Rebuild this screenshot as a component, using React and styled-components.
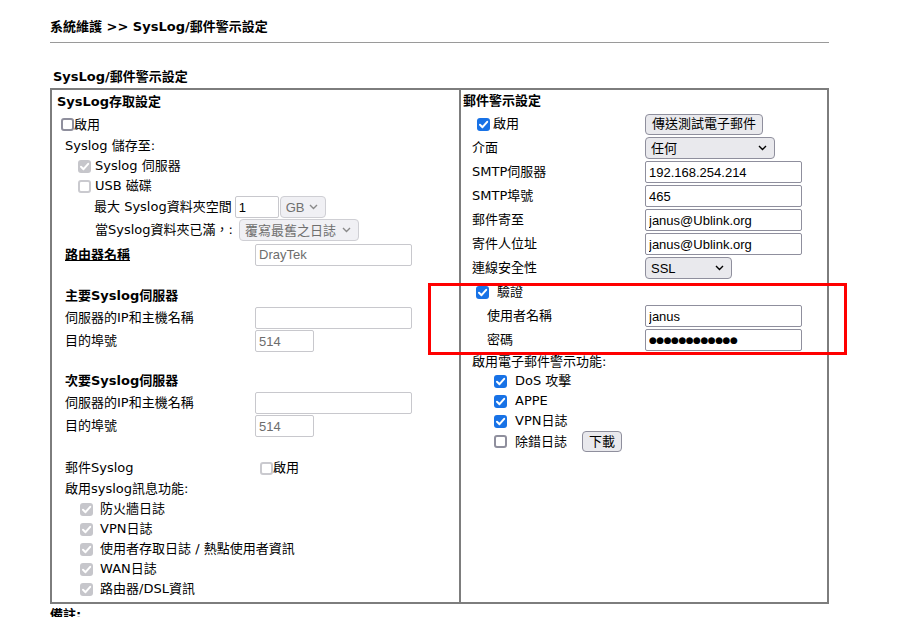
import React from "react";
import styled, { createGlobalStyle, css } from "styled-components";

const GlobalStyle = createGlobalStyle`
  html, body { margin: 0; padding: 0; background: #fff; }
  body {
    font-family: "DejaVu Sans", "Noto Sans CJK TC", sans-serif;
    font-size: 13px;
    color: #000;
  }
  * { box-sizing: border-box; }
`;

const Page = styled.div`
  position: relative;
  width: 829px;
  padding-left: 50px;
`;

const PageTitle = styled.div`
  padding-top: 18px;
  line-height: 18px;
  font-weight: bold;
  white-space: nowrap;
`;

const Rule = styled.div`
  margin-top: 6px;
  height: 1px;
  background: #9a9a9a;
`;

const SectionTitle = styled.div`
  margin-top: 25px;
  padding-left: 3px;
  line-height: 18px;
  font-weight: bold;
`;

const Table = styled.div`
  margin-top: 2px;
  display: flex;
  border: 1px solid #7d7d7d;
`;

const Cell = styled.div`
  width: ${(p) => p.$w}px;
  flex-shrink: 0;
  border: 1px solid #7d7d7d;
  padding-bottom: 3px;
`;

const Row = styled.div`
  display: flex;
  align-items: center;
  height: ${(p) => p.$h || 20}px;
  padding-left: ${(p) => p.$pad || 0}px;
  gap: ${(p) => p.$gap || 0}px;
  white-space: nowrap;
  line-height: 18px;
`;

const Spacer = styled.div`
  height: ${(p) => p.$h}px;
`;

const Label = styled.span`
  width: ${(p) => p.$w}px;
  flex-shrink: 0;
  ${(p) => p.$indent && css`padding-left: ${p.$indent}px;`}
`;

const Strong = styled.span`
  font-weight: bold;
  ${(p) => p.$underline && css`text-decoration: underline;`}
`;

const boxStyles = {
  on: css`background: #1872e6; border: none;`,
  off: css`background: #fff; border: 2px solid #8f8f9d;`,
  disOn: css`background: #c6c6cb; border: none;`,
  disOff: css`background: #fff; border: 2px solid #cacacf;`,
};

const Box = styled.span`
  display: inline-flex;
  align-items: center;
  justify-content: center;
  width: 13px;
  height: 13px;
  flex-shrink: 0;
  border-radius: 3px;
  margin-right: ${(p) => p.$gap || 0}px;
  ${(p) => boxStyles[p.$state]}
`;

function CheckBox({ state, gap }) {
  const checked = state === "on" || state === "disOn";
  return (
    <Box $state={state} $gap={gap} role="checkbox" aria-checked={checked}>
      {checked && (
        <svg width="13" height="13" viewBox="0 0 13 13">
          <path d="M3 6.7 L5.5 9.2 L10.2 3.8" fill="none" stroke="#fff" strokeWidth="2" strokeLinecap="round" strokeLinejoin="round" />
        </svg>
      )}
    </Box>
  );
}

const TextField = styled.input`
  width: ${(p) => p.$w}px;
  height: 22px;
  flex-shrink: 0;
  margin: 0 0 0 ${(p) => p.$ml || 0}px;
  padding: 0 3px;
  border: 1px solid ${(p) => (p.disabled || p.$light ? "#c8c8cd" : "#8f8f9d")};
  border-radius: 2px;
  background: #fff;
  font-family: "Liberation Sans", "Noto Sans CJK TC", sans-serif;
  font-size: 13px;
  color: ${(p) => (p.disabled ? "#6d6d6d" : "#000")};
  outline: none;
`;

const Dots = styled(TextField)`
  font-family: "DejaVu Sans", sans-serif;
  font-size: 9px;
  letter-spacing: -0.5px;
  color: #000;
`;

const SelectWrap = styled.span`
  position: relative;
  display: inline-flex;
  flex-shrink: 0;
  width: ${(p) => p.$w}px;
  height: ${(p) => p.$h || 22}px;
  margin-left: ${(p) => p.$ml || 0}px;
`;

const NativeSelect = styled.select`
  appearance: none;
  width: 100%;
  height: 100%;
  margin: 0;
  padding: 0 0 0 5px;
  border: 1px solid ${(p) => (p.disabled ? "#cfcfd4" : "#8f8f9d")};
  border-radius: 4px;
  background: ${(p) => (p.disabled ? "#f0f0f4" : "#e9e9ed")};
  color: ${(p) => (p.disabled ? "#6f6f6f" : "#000")};
  font-family: "Liberation Sans", "Noto Sans CJK TC", sans-serif;
  font-size: 13px;
  opacity: 1;
  outline: none;
`;

const Chevron = styled.svg`
  position: absolute;
  right: 8px;
  top: 50%;
  margin-top: -3px;
  pointer-events: none;
`;

function Select({ w, value, disabled, h, ml }) {
  return (
    <SelectWrap $w={w} $h={h} $ml={ml}>
      <NativeSelect disabled={disabled} defaultValue={value}>
        <option>{value}</option>
      </NativeSelect>
      <Chevron width="9" height="6" viewBox="0 0 9 6">
        <path d="M1 1 L4.5 4.5 L8 1" fill="none" stroke={disabled ? "#8a8a8a" : "#000"} strokeWidth="1.4" />
      </Chevron>
    </SelectWrap>
  );
}

const Button = styled.button`
  height: 21px;
  margin: 0 0 0 ${(p) => p.$ml || 0}px;
  padding: 0 6px;
  border: 1px solid #8f8f9d;
  border-radius: 4px;
  background: #e9e9ed;
  font-family: "Liberation Sans", "Noto Sans CJK TC", sans-serif;
  font-size: 13px;
  color: #000;
  line-height: 18px;
`;

const Highlight = styled.div`
  position: absolute;
  left: 428px;
  top: 283px;
  width: 419px;
  height: 72px;
  border: 3px solid #ff0000;
  pointer-events: none;
`;

const Note = styled.div`
  padding-top: 2px;
  line-height: 18px;
  font-weight: bold;
`;

const LW = 190;
const RW = 184;

export default function App() {
  return (
    <>
      <GlobalStyle />
      <Page>
        <PageTitle>系統維護 &gt;&gt; SysLog/郵件警示設定</PageTitle>
        <Rule />
        <SectionTitle>SysLog/郵件警示設定</SectionTitle>
        <Table>
          <Cell $w={409}>
            <Row $h={23} $pad={5}><Strong>SysLog存取設定</Strong></Row>
            <Row $h={23} $pad={9}><CheckBox state="off" />啟用</Row>
            <Row $pad={13}>Syslog 儲存至:</Row>
            <Row $pad={26}><CheckBox state="disOn" gap={4} />Syslog 伺服器</Row>
            <Row $pad={26}><CheckBox state="disOff" gap={4} />USB 磁碟</Row>
            <Row $h={22} $pad={42}>
              最大 Syslog資料夾空間
              <TextField $w={44} $ml={3} $light readOnly defaultValue="1" />
              <Select w={46} ml={1} value="GB" disabled />
            </Row>
            <Row $h={24} $pad={43} $gap={6}>
              當Syslog資料夾已滿，:
              <Select w={120} value="覆寫最舊之日誌" disabled />
            </Row>
            <Row $h={25} $pad={13}>
              <Label $w={LW}><Strong $underline>路由器名稱</Strong></Label>
              <TextField $w={157} disabled defaultValue="DrayTek" />
            </Row>
            <Spacer $h={19} />
            <Row $pad={13}><Strong>主要Syslog伺服器</Strong></Row>
            <Row $h={23} $pad={13}>
              <Label $w={LW}>伺服器的IP和主機名稱</Label>
              <TextField $w={157} disabled defaultValue="" />
            </Row>
            <Row $h={24} $pad={13}>
              <Label $w={LW}>目的埠號</Label>
              <TextField $w={59} disabled defaultValue="514" />
            </Row>
            <Spacer $h={18} />
            <Row $pad={13}><Strong>次要Syslog伺服器</Strong></Row>
            <Row $h={23} $pad={13}>
              <Label $w={LW}>伺服器的IP和主機名稱</Label>
              <TextField $w={157} disabled defaultValue="" />
            </Row>
            <Row $h={24} $pad={13}>
              <Label $w={LW}>目的埠號</Label>
              <TextField $w={59} disabled defaultValue="514" />
            </Row>
            <Spacer $h={19} />
            <Row $h={22} $pad={13}>
              <Label $w={195}>郵件Syslog</Label>
              <CheckBox state="disOff" />啟用
            </Row>
            <Row $pad={13}>啟用syslog訊息功能:</Row>
            <Row $pad={28}><CheckBox state="disOn" gap={7} />防火牆日誌</Row>
            <Row $pad={28}><CheckBox state="disOn" gap={7} />VPN日誌</Row>
            <Row $pad={28}><CheckBox state="disOn" gap={7} />使用者存取日誌 / 熱點使用者資訊</Row>
            <Row $pad={28}><CheckBox state="disOn" gap={7} />WAN日誌</Row>
            <Row $pad={28}><CheckBox state="disOn" gap={7} />路由器/DSL資訊</Row>
          </Cell>
          <Cell $w={368}>
            <Row $h={22} $pad={2}><Strong>郵件警示設定</Strong></Row>
            <Row $h={24}>
              <Label $w={RW} $indent={16}><Row as="span" $h={24}><CheckBox state="on" gap={3} />啟用</Row></Label>
              <Button>傳送測試電子郵件</Button>
            </Row>
            <Row $h={24}>
              <Label $w={RW} $indent={11}>介面</Label>
              <Select w={130} value="任何" />
            </Row>
            <Row $h={24}>
              <Label $w={RW} $indent={11}>SMTP伺服器</Label>
              <TextField $w={157} readOnly defaultValue="192.168.254.214" />
            </Row>
            <Row $h={24}>
              <Label $w={RW} $indent={11}>SMTP埠號</Label>
              <TextField $w={157} readOnly defaultValue="465" />
            </Row>
            <Row $h={24}>
              <Label $w={RW} $indent={11}>郵件寄至</Label>
              <TextField $w={157} readOnly defaultValue="janus@Ublink.org" />
            </Row>
            <Row $h={24}>
              <Label $w={RW} $indent={11}>寄件人位址</Label>
              <TextField $w={157} readOnly defaultValue="janus@Ublink.org" />
            </Row>
            <Row $h={24}>
              <Label $w={RW} $indent={11}>連線安全性</Label>
              <Select w={87} value="SSL" />
            </Row>
            <Row $h={24} $pad={15}><CheckBox state="on" gap={8} />驗證</Row>
            <Row $h={24}>
              <Label $w={RW} $indent={26}>使用者名稱</Label>
              <TextField $w={157} readOnly defaultValue="janus" />
            </Row>
            <Row $h={24}>
              <Label $w={RW} $indent={26}>密碼</Label>
              <Dots $w={157} readOnly aria-label="密碼" defaultValue="●●●●●●●●●●●●" />
            </Row>
            <Row $h={19} $pad={11}>啟用電子郵件警示功能:</Row>
            <Row $pad={33}><CheckBox state="on" gap={8} />DoS 攻擊</Row>
            <Row $pad={33}><CheckBox state="on" gap={8} />APPE</Row>
            <Row $pad={33}><CheckBox state="on" gap={8} />VPN日誌</Row>
            <Row $h={21} $pad={33}><CheckBox state="off" gap={8} />除錯日誌<Button $ml={15}>下載</Button></Row>
          </Cell>
        </Table>
        <Note>備註:</Note>
        <Highlight />
      </Page>
    </>
  );
}
